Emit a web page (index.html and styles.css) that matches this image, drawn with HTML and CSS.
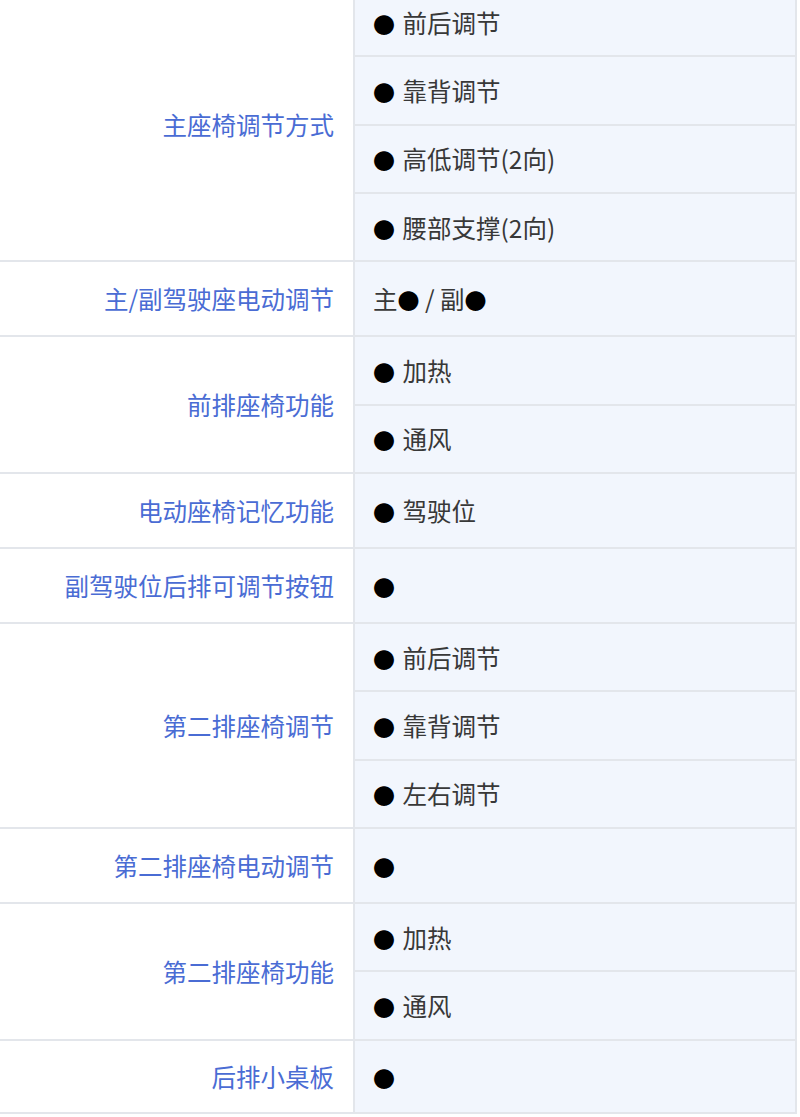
FILE: index.html
```html
<!DOCTYPE html>
<html lang="zh-CN">
<head>
<meta charset="utf-8">
<title>座椅配置</title>
<link rel="stylesheet" href="styles.css">
</head>
<body>
<div class="spec">
  <div class="row">
    <div class="label">主座椅调节方式</div>
    <div class="values">
      <div class="item"><span class="txt"><span class="dot">●</span> 前后调节</span></div>
      <div class="item"><span class="txt"><span class="dot">●</span> 靠背调节</span></div>
      <div class="item"><span class="txt"><span class="dot">●</span> 高低调节(2向)</span></div>
      <div class="item"><span class="txt"><span class="dot">●</span> 腰部支撑(2向)</span></div>
    </div>
  </div>
  <div class="row single">
    <div class="label">主/副驾驶座电动调节</div>
    <div class="values"><div class="item"><span class="txt">主<span class="dot in">●</span> / 副<span class="dot in">●</span></span></div></div>
  </div>
  <div class="row">
    <div class="label">前排座椅功能</div>
    <div class="values">
      <div class="item"><span class="txt"><span class="dot">●</span> 加热</span></div>
      <div class="item"><span class="txt"><span class="dot">●</span> 通风</span></div>
    </div>
  </div>
  <div class="row single">
    <div class="label">电动座椅记忆功能</div>
    <div class="values"><div class="item"><span class="txt"><span class="dot">●</span> 驾驶位</span></div></div>
  </div>
  <div class="row single">
    <div class="label">副驾驶位后排可调节按钮</div>
    <div class="values"><div class="item"><span class="txt"><span class="dot">●</span></span></div></div>
  </div>
  <div class="row">
    <div class="label">第二排座椅调节</div>
    <div class="values">
      <div class="item"><span class="txt"><span class="dot">●</span> 前后调节</span></div>
      <div class="item"><span class="txt"><span class="dot">●</span> 靠背调节</span></div>
      <div class="item"><span class="txt"><span class="dot">●</span> 左右调节</span></div>
    </div>
  </div>
  <div class="row single">
    <div class="label">第二排座椅电动调节</div>
    <div class="values"><div class="item"><span class="txt"><span class="dot">●</span></span></div></div>
  </div>
  <div class="row">
    <div class="label">第二排座椅功能</div>
    <div class="values">
      <div class="item"><span class="txt"><span class="dot">●</span> 加热</span></div>
      <div class="item"><span class="txt"><span class="dot">●</span> 通风</span></div>
    </div>
  </div>
  <div class="row single last">
    <div class="label">后排小桌板</div>
    <div class="values"><div class="item"><span class="txt"><span class="dot">●</span></span></div></div>
  </div>
</div>
</body>
</html>
```

FILE: styles.css
```css
html, body {
  margin: 0;
  padding: 0;
  background: #ffffff;
}

body {
  font-family: "Noto Sans CJK SC", "Noto Sans", sans-serif;
  font-size: 24.5px;
  overflow: hidden;
}

.spec {
  width: 797px;
  margin-top: -11px;
  border-right: 2px solid #e3e6eb;
  box-sizing: border-box;
}

.row {
  display: flex;
  border-bottom: 2px solid #e3e6eb;
}

.label {
  width: 355px;
  flex: none;
  box-sizing: border-box;
  padding-right: 19px;
  border-right: 2px solid #e3e6eb;
  display: flex;
  align-items: center;
  justify-content: flex-end;
  color: #4a6cd4;
  background: #ffffff;
}

.values {
  flex: 1;
  display: flex;
  flex-direction: column;
  background: #f2f6fd;
}

.item {
  height: 66.33px;
  display: flex;
  align-items: center;
  padding-left: 18px;
  color: #383838;
  border-bottom: 2px solid #e3e6eb;
}

.item:last-child {
  border-bottom: none;
}

.txt {
  white-space: pre;
}

.dot {
  color: #000000;
  font-size: 22px;
  margin-right: 2px;
}

.dot.in {
  margin-right: 0;
}

.single .item {
  height: 73px;
}

.single.last .item {
  height: 71px;
}
```
